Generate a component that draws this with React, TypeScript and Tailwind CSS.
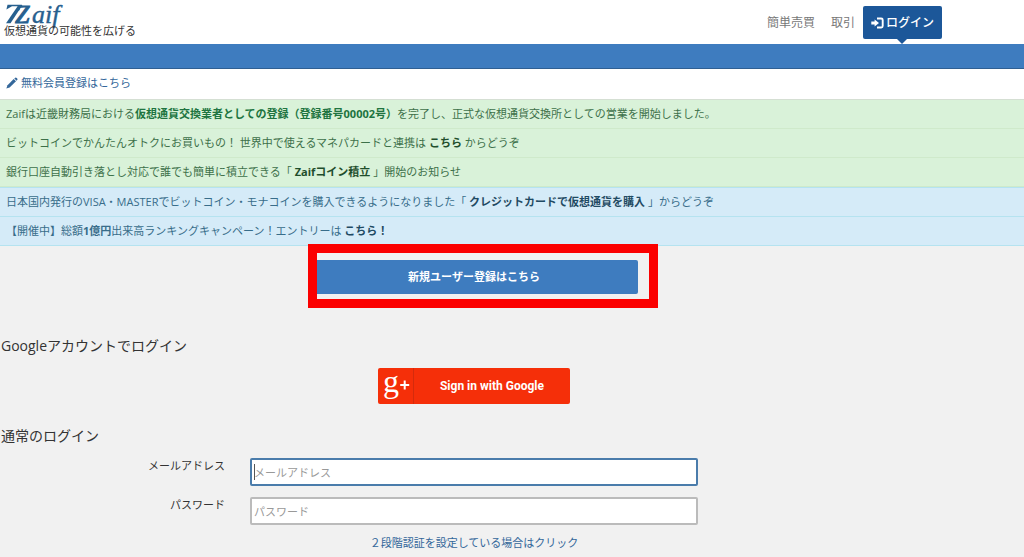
import type { ReactNode } from 'react';

interface NoticeProps {
  children: ReactNode;
}

const Logo = () => (
  <svg width="70" height="25" viewBox="0 0 70 25" role="img" aria-label="Zaif" className="block overflow-visible">
    <g fill="#27608f" fontFamily="Liberation Serif, serif" fontStyle="italic">
      <path d="M3.5 4.8 H18 L16.5 6.3 H8 L2.4 9.5 Z" />
      <path d="M14.5 5 H18.5 L6.5 23.3 H2 Z" />
      <text x="11" y="23" fontSize="26" stroke="#27608f" strokeWidth="1">Z</text>
      <text x="28" y="23" fontSize="26" stroke="#27608f" strokeWidth="0.4">aif</text>
    </g>
  </svg>
);

const PencilIcon = () => (
  <svg width="12" height="12" viewBox="0 0 12 12" fill="currentColor" aria-hidden="true">
    <path d="M8.9 .9 Q9.8 0 10.7 .9 L11.2 1.4 Q12 2.3 11.2 3.1 L10.6 3.7 L8.3 1.5 Z" />
    <path d="M7.7 2.1 L10 4.3 L3.6 10.4 L0.3 11.6 L1.5 8.3 Z" />
  </svg>
);

const LoginIcon = () => (
  <svg width="13" height="12" viewBox="0 0 13 12" aria-hidden="true">
    <path d="M6 1.5 H10.2 Q11.7 1.5 11.7 3 V9 Q11.7 10.5 10.2 10.5 H6" fill="none" stroke="currentColor" strokeWidth="1.9" />
    <path d="M0.3 4.6 H3.6 V2.4 L8 6 L3.6 9.6 V7.4 H0.3 Z" fill="currentColor" />
  </svg>
);

const GooglePlusIcon = () => (
  <svg width="35" height="36" viewBox="0 0 35 36" fill="#fff" className="overflow-visible" aria-hidden="true">
    <text x="5" y="24" fontSize="32" fontWeight="400" fontFamily="Liberation Serif, serif">g</text>
    <path d="M25.7 12.5 h2 v3.5 h3.5 v2 h-3.5 v3.5 h-2 v-3.5 h-3.5 v-2 h3.5 z" />
  </svg>
);

const SuccessNotice = ({ children }: NoticeProps) => (
  <p className="border-b border-[#cfeacb] bg-[#d9f2d9] px-1.5 py-1 text-[11px] leading-5 text-[#3d7049]">
    {children}
  </p>
);

const InfoNotice = ({ children }: NoticeProps) => (
  <p className="border-b border-[#b5e3f0] bg-[#d5ebf8] px-1.5 py-1 text-[11px] leading-5 text-[#386d8a]">
    {children}
  </p>
);

const App = () => {
  return (
    <div className="min-h-screen bg-[#f1f1f1] font-['Open_Sans','Noto_Sans_CJK_JP',sans-serif] text-[#333]">
      <header className="bg-white">
        <div className="flex h-11 max-w-[948px] items-start justify-between pr-1.5 pl-1">
          <a href="#" className="block text-[11px] leading-3 text-[#333]">
            <Logo />
            仮想通貨の可能性を広げる
          </a>
          <nav className="flex items-center gap-4 pt-1.5 text-xs text-[#777]">
            <a href="#">簡単売買</a>
            <div className="flex items-center gap-2">
              <a href="#">取引</a>
              <a
                href="#"
                className="relative flex h-[33px] items-center gap-0.5 rounded-xs bg-[#1c5799] px-2 font-medium text-white"
              >
                <LoginIcon />
                ログイン
                <svg
                  width="10"
                  height="5"
                  viewBox="0 0 10 5"
                  fill="#1c5799"
                  className="absolute top-full left-1/2 -translate-x-1/2"
                  aria-hidden="true"
                >
                  <path d="M0 0 H10 L5 5 Z" />
                </svg>
              </a>
            </div>
          </nav>
        </div>
        <div className="h-[25px] border-b border-[#2f5f92] bg-[#3e7cbf]" />
        <div className="px-1.5 py-1 text-[11px] leading-5">
          <a href="#" className="inline-flex items-center gap-[3px] text-[#34679a]">
            <PencilIcon />
            無料会員登録はこちら
          </a>
        </div>
      </header>

      <section className="border-t border-[#d5dfd3]">
        <div>
          <SuccessNotice>
            Zaifは近畿財務局における
            <strong className="text-[#207440]">仮想通貨交換業者としての登録（登録番号00002号）</strong>
            を完了し、正式な仮想通貨交換所としての営業を開始しました。
          </SuccessNotice>
          <SuccessNotice>
            ビットコインでかんたんオトクにお買いもの！ 世界中で使えるマネパカードと連携は{' '}
            <a href="#" className="font-bold text-[#1f4e2c]">こちら</a> からどうぞ
          </SuccessNotice>
          <SuccessNotice>
            銀行口座自動引き落とし対応で誰でも簡単に積立できる「{' '}
            <a href="#" className="font-bold text-[#1f4e2c]">Zaifコイン積立</a> 」開始のお知らせ
          </SuccessNotice>
        </div>
        <div className="border-t border-[#b5e3f0]">
          <InfoNotice>
            日本国内発行のVISA・MASTERでビットコイン・モナコインを購入できるようになりました「{' '}
            <a href="#" className="font-bold text-[#1f4a63]">クレジットカードで仮想通貨を購入</a> 」からどうぞ
          </InfoNotice>
          <InfoNotice>
            【開催中】総額<strong>1億円</strong>出来高ランキングキャンペーン！エントリーは{' '}
            <a href="#" className="font-bold text-[#1f4a63]">こちら！</a>
          </InfoNotice>
        </div>
      </section>

      <main className="max-w-[948px] pt-3.5 pb-1">
        <div className="relative mx-auto w-[328px]">
          <button type="button" className="h-[34px] w-full rounded-xs bg-[#3e7cbf] text-[11px] font-bold text-white">
            新規ユーザー登録はこちら
          </button>
          <div
            className="pointer-events-none absolute -top-4 -right-5 -bottom-3.5 -left-0.5 border-[9px] border-[#fb0000]"
            aria-hidden="true"
          />
        </div>

        <h2 className="mt-[42px] pl-px text-sm leading-5">Googleアカウントでログイン</h2>
        <button
          type="button"
          className="mx-auto mt-3 flex h-9 w-48 items-center rounded-xs bg-[#f52f09] font-[Roboto,sans-serif] text-xs font-bold text-white"
        >
          <span className="border-r border-[#d42b0c]">
            <GooglePlusIcon />
          </span>
          <span className="flex-1 text-center">Sign in with Google</span>
        </button>

        <h2 className="mt-[22px] pl-px text-sm leading-5">通常のログイン</h2>
        <form className="mt-3 text-[11px]">
          <div className="grid grid-cols-4">
            <label htmlFor="email" className="pr-3 text-right leading-4">
              メールアドレス
            </label>
            <div className="relative col-span-2 px-[13px]">
              <input
                id="email"
                type="email"
                placeholder="メールアドレス"
                className="block h-7 w-full rounded-xs border-2 border-[#4a7cab] bg-white px-0.5 outline-none placeholder:text-[#999]"
              />
              <span className="absolute top-1.5 left-[17px] h-4 w-px bg-[#555]" aria-hidden="true" />
            </div>
          </div>
          <div className="mt-[11px] grid grid-cols-4">
            <label htmlFor="password" className="pr-3 text-right leading-4">
              パスワード
            </label>
            <div className="col-span-2 px-[13px]">
              <input
                id="password"
                type="password"
                placeholder="パスワード"
                className="block h-7 w-full rounded-xs border-2 border-[#bbb] bg-white px-0.5 outline-none placeholder:text-[#999]"
              />
            </div>
          </div>
          <p className="mt-2 text-center leading-5">
            <a href="#" className="text-[#34679a]">２段階認証を設定している場合はクリック</a>
          </p>
        </form>
      </main>
    </div>
  );
};

export default App;
